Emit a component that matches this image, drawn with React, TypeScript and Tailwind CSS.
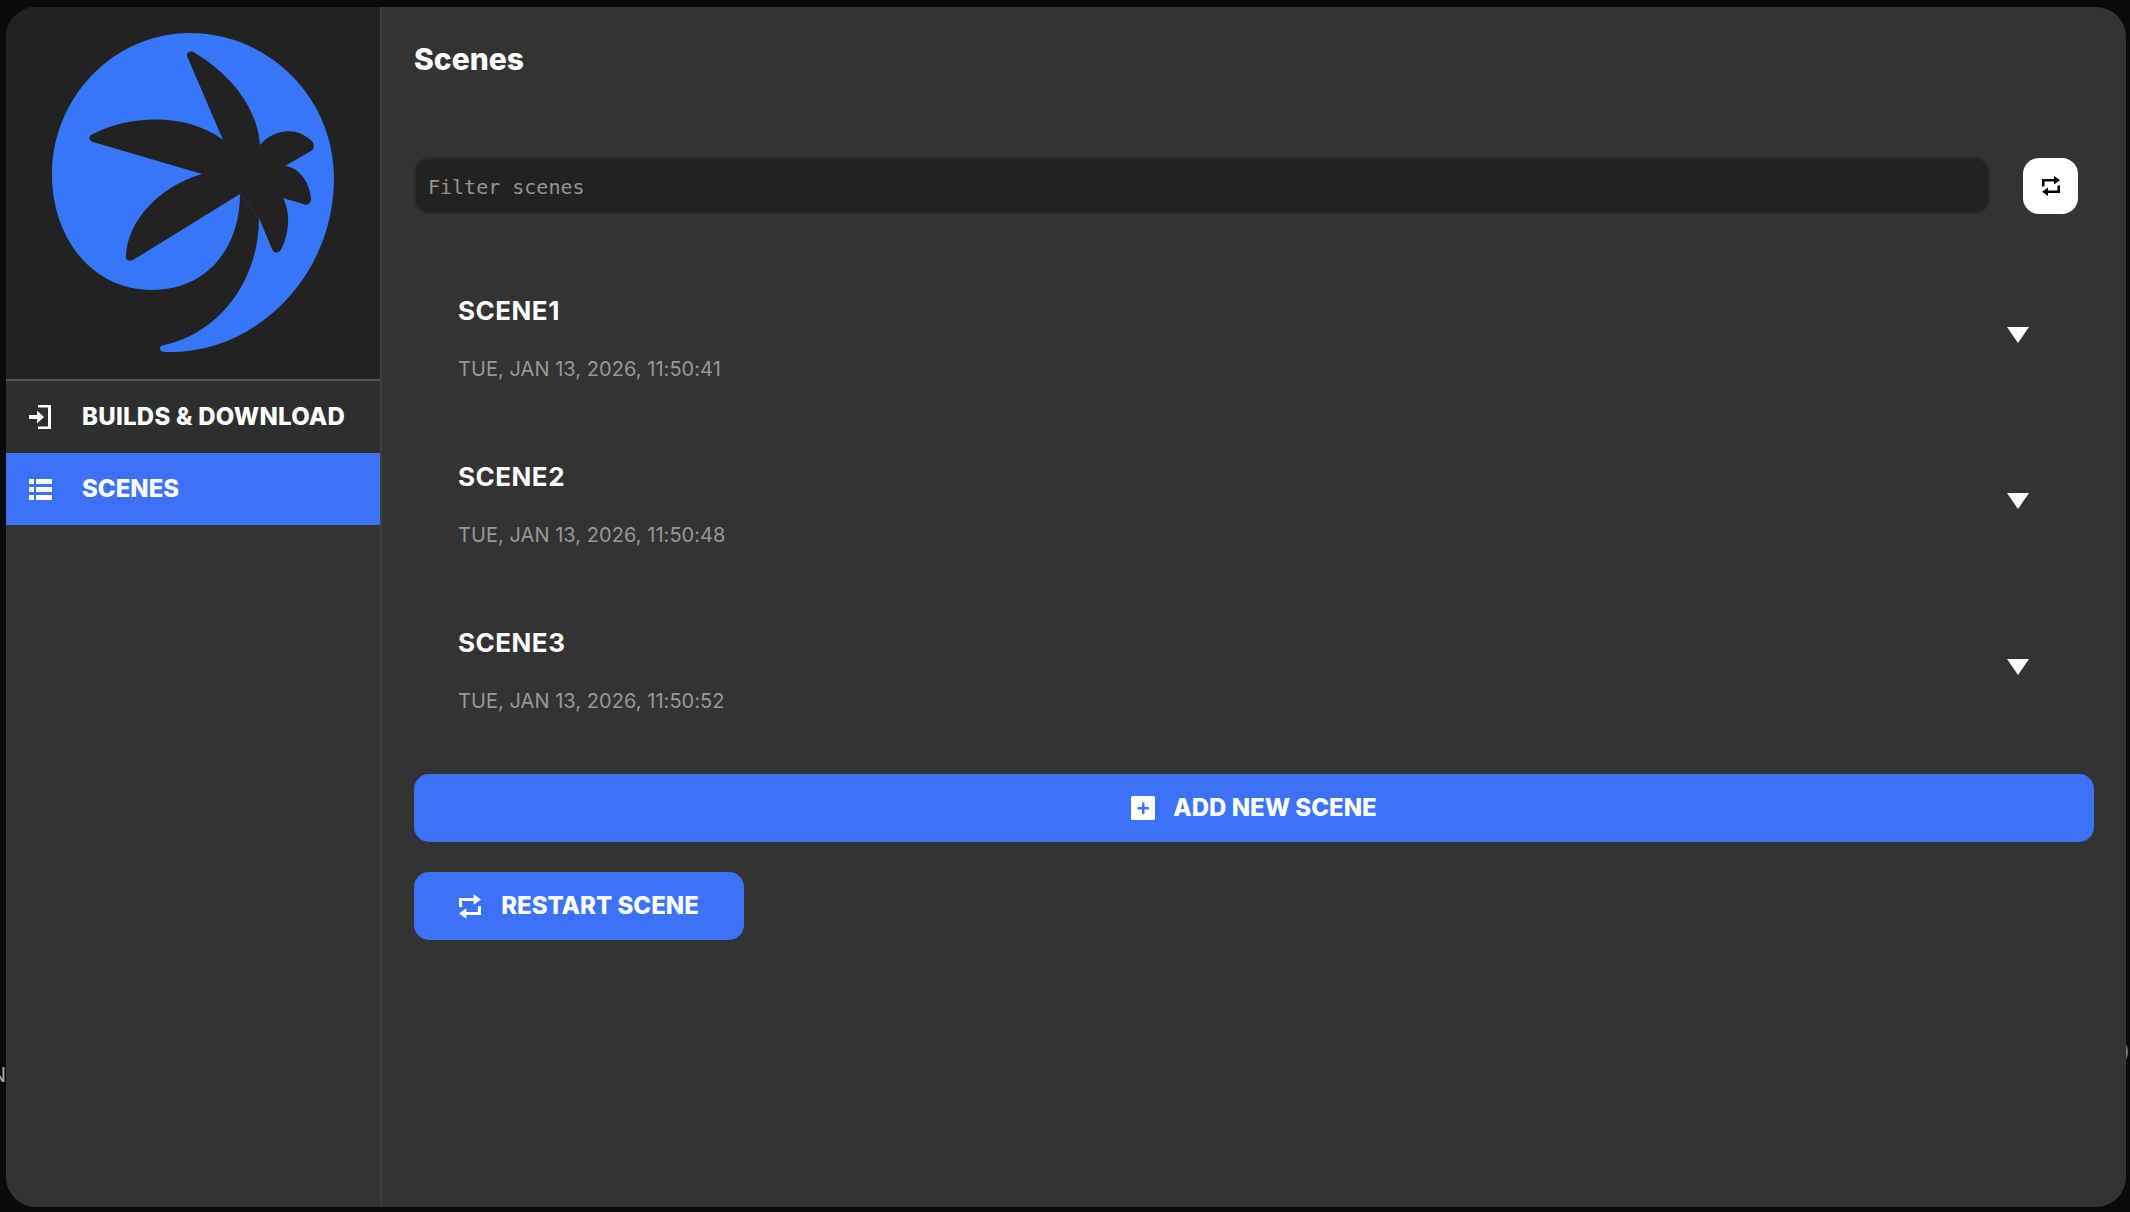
const scenes = [
  { name: "SCENE1", date: "TUE, JAN 13, 2026, 11:50:41" },
  { name: "SCENE2", date: "TUE, JAN 13, 2026, 11:50:48" },
  { name: "SCENE3", date: "TUE, JAN 13, 2026, 11:50:52" },
]

function PalmLogo() {
  return (
    <svg viewBox="0 0 374 372" className="w-[374px] h-[372px]">
      <g transform="translate(-6 -7)">
        <path
          d="M190 33C268 33 334 97 334 178C334 275 258 352 170 352L165 352C159 352 158 346 164 345C220 333 259 280 259 218L240 194C240 250 205 290 152 290C90 290 52 235 52 175C52 97 114 33 190 33Z"
          fill="#3577f8"
        />
        <path
          d="M187 56C186 52 191 50 195 53C232 75 258 110 260 145C272 130 295 125 312 141C315 145 314 149 311 151L285 166C300 168 309 182 311 198C311 204 307 206 303 204L283 198C291 214 289 232 282 248C279 254 274 254 272 249L259 218L240 194L133 260C129 262 125 260 126 255C128 220 160 186 202 174L93 142C88 140 88 136 93 134C135 113 190 115 223 140Z"
          fill="#222222"
        />
      </g>
    </svg>
  )
}

function LoginIcon() {
  return (
    <svg viewBox="0 0 22 24" className="w-[22px] h-[24px]" fill="#ffffff">
      <path d="M9 0H22V24H9V21.5H19V2.5H9Z" />
      <path d="M0 10H8V5.5L15 12L8 18.5V14H0Z" />
    </svg>
  )
}

function ListIcon() {
  return (
    <svg viewBox="0 0 23 21" className="w-[23px] h-[21px]" fill="#ffffff">
      <rect x="0" y="0" width="5" height="5" />
      <rect x="0" y="8" width="5" height="5" />
      <rect x="0" y="16" width="5" height="5" />
      <rect x="7" y="0" width="16" height="5" />
      <rect x="7" y="8" width="16" height="5" />
      <rect x="7" y="16" width="16" height="5" />
    </svg>
  )
}

function PlusBox() {
  return (
    <svg viewBox="0 0 24 24" className="w-[24px] h-[24px]">
      <rect width="24" height="24" rx="1.5" fill="#ffffff" />
      <path d="M11 6.5H13.5V11H18V13.5H13.5V18H11V13.5H6.5V11H11Z" fill="#3b72f8" />
    </svg>
  )
}

// heavier than the material repeat glyph, to match the chunky arrowheads
function RepeatIcon({ className }: { className: string }) {
  return (
    <svg viewBox="0 0 18 20" className={className} fill="currentColor">
      <path d="M0 3H12V0L18 4.25L12 8.5V5.5H2.5V10.5H0Z" />
      <path d="M18 17H6V20L0 15.75L6 11.5V14.5H15.5V9.5H18Z" />
    </svg>
  )
}

export default function App() {
  return (
    <div className="relative h-[1212px] overflow-hidden bg-[#0a0a0a] pl-[6px] pr-[4px] pt-[7px] pb-[5px] font-['Inter',sans-serif] text-white">
      {/* bits of the page behind the modal */}
      <span className="absolute left-[-9px] top-[1065px] text-[20px] leading-[20px] text-[#a8a8a8]">N</span>
      <span className="absolute right-0 top-[1034px] text-[36px] leading-[36px] text-[#777777]">O</span>

      <div className="relative flex h-full overflow-hidden rounded-[30px] bg-[#333333]">
        {/* Sidebar */}
        <aside className="w-[376px] shrink-0 border-r-2 border-[#3e3e3e]">
          <div className="h-[374px] border-b-2 border-[#555555] bg-[#222222]">
            <PalmLogo />
          </div>
          <div className="flex h-[72px] items-center bg-[#2e2e2e] pl-[23px] text-[24px] font-extrabold">
            <LoginIcon />
            <span className="ml-[31px] whitespace-nowrap tracking-[0.25px]">BUILDS &amp; DOWNLOAD</span>
          </div>
          <div className="flex h-[72px] items-center bg-[#3b72f8] pl-[23px] text-[24px] font-extrabold">
            <ListIcon />
            <span className="ml-[30px]">SCENES</span>
          </div>
        </aside>

        {/* Main */}
        <main className="flex-1 pl-[32px] pr-[32px]">
          <h1 className="pt-[32px] text-[30px] leading-[40px] font-extrabold">Scenes</h1>

          <div className="mt-[78px] flex items-center">
            <input
              placeholder="Filter scenes"
              className="h-[57px] w-[1576px] rounded-[15px] border-2 border-[#2b2b2b] bg-[#222222] px-[12px] pt-[2px] font-['DejaVu_Sans_Mono',monospace] text-[20px] text-white outline-none placeholder:text-[#949494]"
            />
            <button className="ml-[33px] flex h-[56px] w-[55px] items-center justify-center rounded-[16px] bg-white text-black">
              <RepeatIcon className="w-[18px] h-[20px]" />
            </button>
          </div>

          <div className="mt-[34px]">
            {scenes.map((s) => (
              <div key={s.name} className="flex h-[166px] items-center justify-between pl-[44px] pr-[65px] pt-[8px]">
                <div className="pt-[7px]">
                  <div className="text-[26px] leading-[34px] font-bold tracking-[0.5px]">{s.name}</div>
                  <div className="mt-[27px] text-[20px] leading-[28px] tracking-[0.05px] text-[#989898]">{s.date}</div>
                </div>
                <svg viewBox="0 0 22 16" className="w-[22px] h-[16px]" fill="#ffffff">
                  <path d="M0 0H22L11 16Z" />
                </svg>
              </div>
            ))}
          </div>

          <button className="mt-[28px] flex h-[68px] w-full items-center justify-center rounded-[15px] bg-[#3b72f8] text-[24px] font-extrabold">
            <PlusBox />
            <span className="ml-[18px]">ADD NEW SCENE</span>
          </button>
          <button className="mt-[30px] flex h-[68px] w-[330px] items-center justify-center rounded-[15px] bg-[#3b72f8] text-[24px] font-extrabold">
            <RepeatIcon className="w-[22px] h-[25px]" />
            <span className="ml-[20px]">RESTART SCENE</span>
          </button>
        </main>
      </div>
    </div>
  )
}
